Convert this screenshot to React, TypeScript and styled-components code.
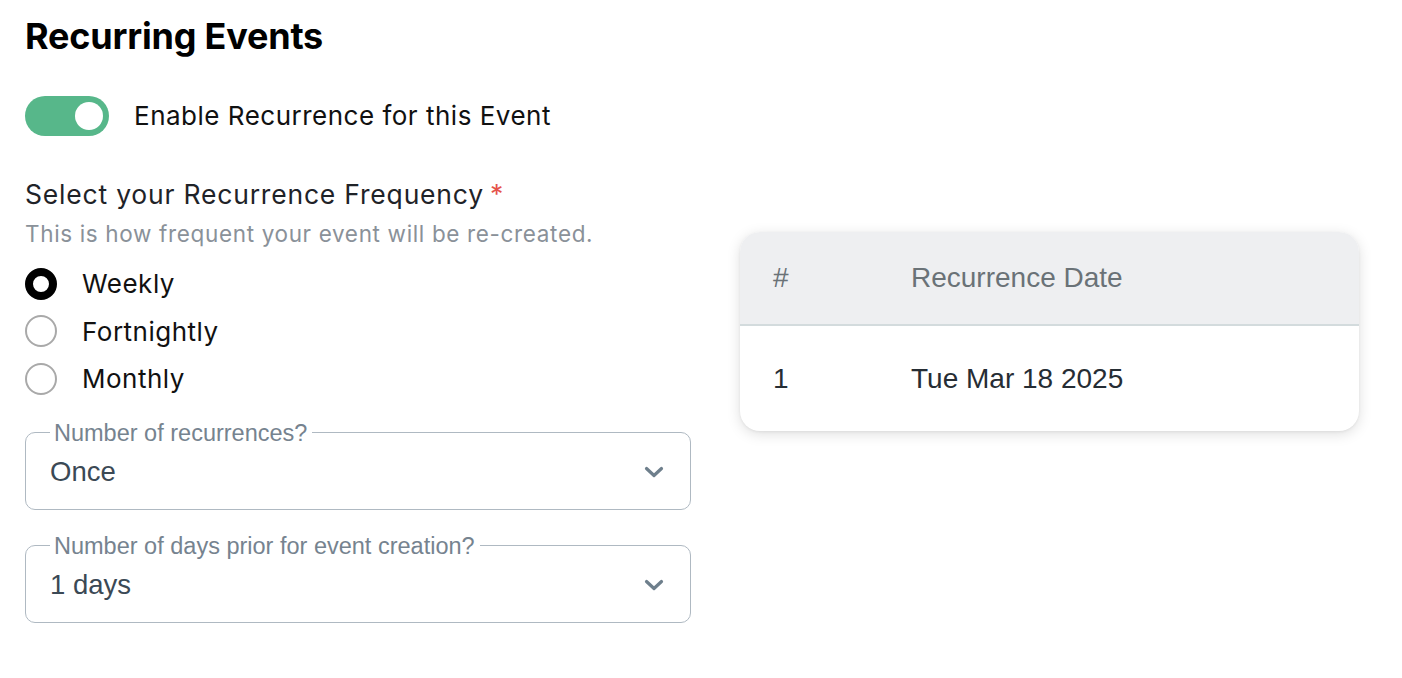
import React, { useState } from "react";
import styled, { createGlobalStyle } from "styled-components";

const GlobalStyle = createGlobalStyle`
  html, body { margin: 0; padding: 0; background: #ffffff; }
  body { font-family: Inter, "Noto Sans", sans-serif; color: #111; }
  * { box-sizing: border-box; }
`;

const Page = styled.div`
  padding: 14px 0 0 25px;
  width: 1402px;
`;

const Title = styled.h1`
  margin: 0;
  font-family: Inter, sans-serif;
  font-weight: 700;
  font-size: 36px;
  line-height: 44px;
  color: #000;
  letter-spacing: -0.2px;
`;

const ToggleRow = styled.label`
  display: flex;
  align-items: center;
  gap: 25px;
  margin-top: 38px;
  height: 40px;
  cursor: pointer;
`;

const Switch = styled.span<{ $on: boolean }>`
  position: relative;
  width: 84px;
  height: 40px;
  border-radius: 20px;
  background: ${(p) => (p.$on ? "#57b78a" : "#c9ced3")};
  flex-shrink: 0;
  &::after {
    content: "";
    position: absolute;
    top: 6px;
    left: ${(p) => (p.$on ? "50px" : "6px")};
    width: 28px;
    height: 28px;
    border-radius: 50%;
    background: #fff;
  }
`;

const ToggleText = styled.span`
  font-size: 26px;
  letter-spacing: 0.5px;
  color: #111;
  line-height: 32px;
`;

const Columns = styled.div`
  display: flex;
  gap: 49px;
  margin-top: 42px;
  align-items: flex-start;
`;

const LeftCol = styled.div`
  width: 666px;
  display: flex;
  flex-direction: column;
`;

const FieldLabel = styled.div`
  font-size: 26.5px;
  letter-spacing: 0.8px;
  line-height: 32px;
  color: #1f2328;
`;

const Required = styled.span`
  color: #e5534b;
  margin-left: 6px;
`;

const Help = styled.div`
  margin-top: 10px;
  font-size: 22.5px;
  letter-spacing: 0.65px;
  line-height: 28px;
  color: #8a9199;
`;

const RadioList = styled.div`
  margin-top: 12px;
  display: flex;
  flex-direction: column;
`;

const RadioRow = styled.label`
  display: flex;
  align-items: center;
  gap: 25px;
  height: 47.5px;
  cursor: pointer;
`;

const RadioCircle = styled.span<{ $checked: boolean }>`
  width: 32px;
  height: 32px;
  border-radius: 50%;
  flex-shrink: 0;
  background: #fff;
  border: ${(p) => (p.$checked ? "8px solid #000" : "2px solid #a9a9a9")};
`;

const RadioText = styled.span`
  font-size: 26px;
  letter-spacing: 0.5px;
  color: #111;
`;

const SelectBox = styled.fieldset<{ $first?: boolean }>`
  margin: ${(p) => (p.$first ? "17px" : "23px")} 0 0 0;
  padding: 0 26px 11px 24px;
  border: 1.5px solid #afb9c2;
  border-radius: 10px;
  min-width: 0;
`;

const Legend = styled.legend`
  padding: 0 5px 0 4px;
  font-family: "Liberation Sans", Arial, sans-serif;
  font-size: 23.5px;
  line-height: 26px;
  color: #76838f;
`;

const SelectValue = styled.div`
  height: 52px;
  display: flex;
  align-items: center;
  justify-content: space-between;
  font-family: "Liberation Sans", Arial, sans-serif;
  font-size: 27.5px;
  color: #3b4955;
`;

const Card = styled.div`
  margin-top: 54px;
  width: 619px;
  border-radius: 20px;
  overflow: hidden;
  background: #fff;
  box-shadow: 0 3px 14px rgba(0, 0, 0, 0.13), 0 1px 3px rgba(0, 0, 0, 0.06);
`;

const Table = styled.table`
  width: 100%;
  border-collapse: collapse;
  font-family: "Liberation Sans", Arial, sans-serif;
  font-size: 28px;
`;

const HeadCell = styled.th<{ $narrow?: boolean }>`
  background: #eeeff1;
  height: 93px;
  text-align: left;
  font-weight: 400;
  color: #6a7277;
  padding: 0 0 0 ${(p) => (p.$narrow ? "33px" : "0")};
  width: ${(p) => (p.$narrow ? "171px" : "auto")};
  border-bottom: 2px solid #d3dbdd;
`;

const BodyCell = styled.td<{ $narrow?: boolean }>`
  height: 106px;
  color: #262d34;
  padding: 0 0 0 ${(p) => (p.$narrow ? "33px" : "0")};
`;

const Chevron = () => (
  <svg width="20" height="12" viewBox="0 0 20 12" fill="none">
    <path d="M2.5 2.5 L10 9.5 L17.5 2.5" stroke="#6e7f8c" strokeWidth="3.2" strokeLinecap="round" strokeLinejoin="round" />
  </svg>
);

const options = ["Weekly", "Fortnightly", "Monthly"];

export default function App() {
  const [on, setOn] = useState(true);
  const [freq, setFreq] = useState("Weekly");
  return (
    <>
      <GlobalStyle />
      <Page>
        <Title>Recurring Events</Title>
        <ToggleRow onClick={() => setOn(!on)}>
          <Switch $on={on} />
          <ToggleText>Enable Recurrence for this Event</ToggleText>
        </ToggleRow>
        <Columns>
          <LeftCol>
            <FieldLabel>
              Select your Recurrence Frequency<Required>*</Required>
            </FieldLabel>
            <Help>This is how frequent your event will be re-created.</Help>
            <RadioList>
              {options.map((o) => (
                <RadioRow key={o} onClick={() => setFreq(o)}>
                  <RadioCircle $checked={freq === o} />
                  <RadioText>{o}</RadioText>
                </RadioRow>
              ))}
            </RadioList>
            <SelectBox $first>
              <Legend>Number of recurrences?</Legend>
              <SelectValue>
                <span>Once</span>
                <Chevron />
              </SelectValue>
            </SelectBox>
            <SelectBox>
              <Legend>Number of days prior for event creation?</Legend>
              <SelectValue>
                <span>1 days</span>
                <Chevron />
              </SelectValue>
            </SelectBox>
          </LeftCol>
          <Card>
            <Table>
              <thead>
                <tr>
                  <HeadCell $narrow>#</HeadCell>
                  <HeadCell>Recurrence Date</HeadCell>
                </tr>
              </thead>
              <tbody>
                <tr>
                  <BodyCell $narrow>1</BodyCell>
                  <BodyCell>Tue Mar 18 2025</BodyCell>
                </tr>
              </tbody>
            </Table>
          </Card>
        </Columns>
      </Page>
    </>
  );
}
